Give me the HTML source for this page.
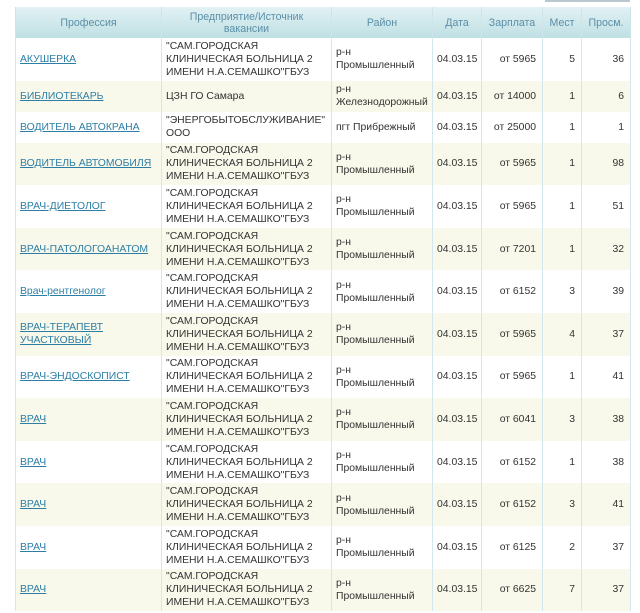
<!DOCTYPE html>
<html><head><meta charset="utf-8"><style>
body{margin:0;background:#fff;width:640px;height:613px;overflow:hidden;font-family:"Liberation Sans",Arial,sans-serif;font-size:10.4px;color:#333}
.topbox{position:absolute;left:545px;top:0;width:85px;height:2px;background:#b8c8d0}
table{position:absolute;left:15px;top:7px;border-collapse:collapse;table-layout:fixed;width:615px}
th{height:31px;background:linear-gradient(#e2f1f4,#bfe0e4);color:#5a8fa8;font-weight:normal;font-size:10.6px;line-height:12px;border-left:1px solid #cfe3ea;border-right:1px solid #cfe3ea;padding:0 3px}
td{border-left:1px solid #d4e6ee;border-right:1px solid #d4e6ee;padding:0 4px 0 4px;line-height:13px;vertical-align:middle;white-space:normal}
td.n{white-space:nowrap}
tr.y td{background:#f8f9ea}
td.r{text-align:right;padding-right:6px}
a{color:#2d7ea6;text-decoration:underline}
tr.h3 td{height:42.6px}
tr.h2 td{height:31px}
</style></head><body>
<div class="topbox"></div>
<table>
<colgroup><col style="width:146px"><col style="width:170px"><col style="width:101px"><col style="width:49px"><col style="width:61px"><col style="width:39px"><col style="width:49px"></colgroup>
<tr><th>Профессия</th><th>Предприятие/Источник<br>вакансии</th><th>Район</th><th>Дата</th><th>Зарплата</th><th>Мест</th><th>Просм.</th></tr>
<tr class="h3"><td class="n"><a>АКУШЕРКА</a></td><td>"САМ.ГОРОДСКАЯ КЛИНИЧЕСКАЯ БОЛЬНИЦА 2 ИМЕНИ Н.А.СЕМАШКО"ГБУЗ</td><td>р-н<br>Промышленный</td><td>04.03.15</td><td class="r">от 5965</td><td class="r">5</td><td class="r">36</td></tr>
<tr class="h2 y"><td class="n"><a>БИБЛИОТЕКАРЬ</a></td><td>ЦЗН ГО Самара</td><td>р-н<br>Железнодорожный</td><td>04.03.15</td><td class="r">от 14000</td><td class="r">1</td><td class="r">6</td></tr>
<tr class="h2"><td class="n"><a>ВОДИТЕЛЬ АВТОКРАНА</a></td><td>"ЭНЕРГОБЫТОБСЛУЖИВАНИЕ" ООО</td><td>пгт Прибрежный</td><td>04.03.15</td><td class="r">от 25000</td><td class="r">1</td><td class="r">1</td></tr>
<tr class="h3 y"><td class="n"><a>ВОДИТЕЛЬ АВТОМОБИЛЯ</a></td><td>"САМ.ГОРОДСКАЯ КЛИНИЧЕСКАЯ БОЛЬНИЦА 2 ИМЕНИ Н.А.СЕМАШКО"ГБУЗ</td><td>р-н<br>Промышленный</td><td>04.03.15</td><td class="r">от 5965</td><td class="r">1</td><td class="r">98</td></tr>
<tr class="h3"><td class="n"><a>ВРАЧ-ДИЕТОЛОГ</a></td><td>"САМ.ГОРОДСКАЯ КЛИНИЧЕСКАЯ БОЛЬНИЦА 2 ИМЕНИ Н.А.СЕМАШКО"ГБУЗ</td><td>р-н<br>Промышленный</td><td>04.03.15</td><td class="r">от 5965</td><td class="r">1</td><td class="r">51</td></tr>
<tr class="h3 y"><td class="n"><a>ВРАЧ-ПАТОЛОГОАНАТОМ</a></td><td>"САМ.ГОРОДСКАЯ КЛИНИЧЕСКАЯ БОЛЬНИЦА 2 ИМЕНИ Н.А.СЕМАШКО"ГБУЗ</td><td>р-н<br>Промышленный</td><td>04.03.15</td><td class="r">от 7201</td><td class="r">1</td><td class="r">32</td></tr>
<tr class="h3"><td class="n"><a>Врач-рентгенолог</a></td><td>"САМ.ГОРОДСКАЯ КЛИНИЧЕСКАЯ БОЛЬНИЦА 2 ИМЕНИ Н.А.СЕМАШКО"ГБУЗ</td><td>р-н<br>Промышленный</td><td>04.03.15</td><td class="r">от 6152</td><td class="r">3</td><td class="r">39</td></tr>
<tr class="h3 y"><td><a>ВРАЧ-ТЕРАПЕВТ<br>УЧАСТКОВЫЙ</a></td><td>"САМ.ГОРОДСКАЯ КЛИНИЧЕСКАЯ БОЛЬНИЦА 2 ИМЕНИ Н.А.СЕМАШКО"ГБУЗ</td><td>р-н<br>Промышленный</td><td>04.03.15</td><td class="r">от 5965</td><td class="r">4</td><td class="r">37</td></tr>
<tr class="h3"><td class="n"><a>ВРАЧ-ЭНДОСКОПИСТ</a></td><td>"САМ.ГОРОДСКАЯ КЛИНИЧЕСКАЯ БОЛЬНИЦА 2 ИМЕНИ Н.А.СЕМАШКО"ГБУЗ</td><td>р-н<br>Промышленный</td><td>04.03.15</td><td class="r">от 5965</td><td class="r">1</td><td class="r">41</td></tr>
<tr class="h3 y"><td><a>ВРАЧ</a></td><td>"САМ.ГОРОДСКАЯ КЛИНИЧЕСКАЯ БОЛЬНИЦА 2 ИМЕНИ Н.А.СЕМАШКО"ГБУЗ</td><td>р-н<br>Промышленный</td><td>04.03.15</td><td class="r">от 6041</td><td class="r">3</td><td class="r">38</td></tr>
<tr class="h3"><td><a>ВРАЧ</a></td><td>"САМ.ГОРОДСКАЯ КЛИНИЧЕСКАЯ БОЛЬНИЦА 2 ИМЕНИ Н.А.СЕМАШКО"ГБУЗ</td><td>р-н<br>Промышленный</td><td>04.03.15</td><td class="r">от 6152</td><td class="r">1</td><td class="r">38</td></tr>
<tr class="h3 y"><td><a>ВРАЧ</a></td><td>"САМ.ГОРОДСКАЯ КЛИНИЧЕСКАЯ БОЛЬНИЦА 2 ИМЕНИ Н.А.СЕМАШКО"ГБУЗ</td><td>р-н<br>Промышленный</td><td>04.03.15</td><td class="r">от 6152</td><td class="r">3</td><td class="r">41</td></tr>
<tr class="h3"><td><a>ВРАЧ</a></td><td>"САМ.ГОРОДСКАЯ КЛИНИЧЕСКАЯ БОЛЬНИЦА 2 ИМЕНИ Н.А.СЕМАШКО"ГБУЗ</td><td>р-н<br>Промышленный</td><td>04.03.15</td><td class="r">от 6125</td><td class="r">2</td><td class="r">37</td></tr>
<tr class="h3 y"><td><a>ВРАЧ</a></td><td>"САМ.ГОРОДСКАЯ КЛИНИЧЕСКАЯ БОЛЬНИЦА 2 ИМЕНИ Н.А.СЕМАШКО"ГБУЗ</td><td>р-н<br>Промышленный</td><td>04.03.15</td><td class="r">от 6625</td><td class="r">7</td><td class="r">37</td></tr>
</table>
</body></html>
